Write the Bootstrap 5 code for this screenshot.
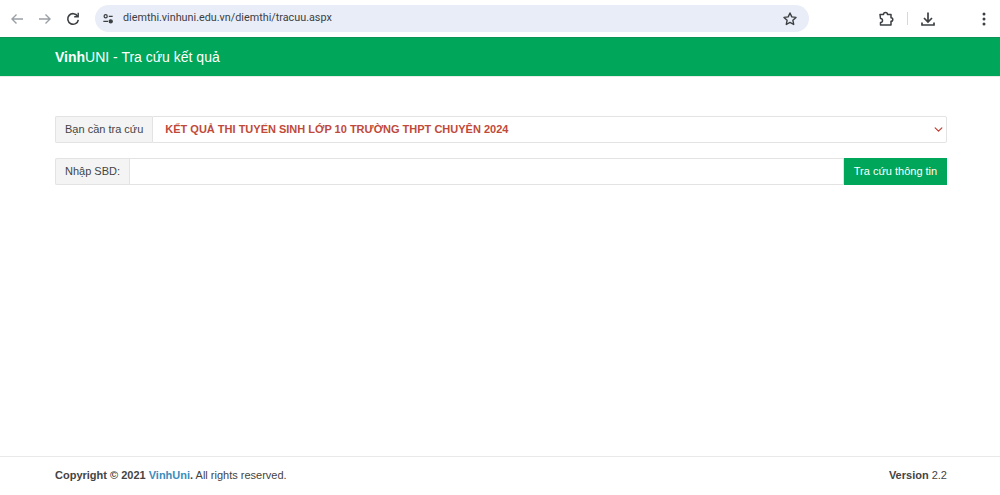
<!DOCTYPE html>
<html lang="vi">
<head>
<meta charset="utf-8">
<title>VinhUNI - Tra cứu kết quả</title>
<link href="https://cdn.jsdelivr.net/npm/bootstrap@5.3.0/dist/css/bootstrap.min.css" rel="stylesheet">
<style>
html,body{height:495px;overflow:hidden}
body{font-family:"Liberation Sans",Arial,sans-serif;font-size:11px;color:#444;background:#fff;display:flex;flex-direction:column}
.chrome-bar{height:37px;background:#fff;padding:0 0 0 3px;flex:none}
.tool-ico{width:18px;height:18px;flex:none;display:block}
.nav-slot{width:28px;display:flex;justify-content:center;align-items:center;height:37px;flex:none}
.url-pill{width:714px;height:27px;margin-top:5px;margin-left:8px;border-radius:14px;background:#e9edf7;padding:0 9px 0 6px;color:#3c4043;font-size:10.8px;font-family:"Roboto","Liberation Sans",sans-serif}
.tune-chip{width:14px;height:14px;flex:none;margin-right:8px}
.star-ico{margin-right:1px}
.right-tools{margin-left:68px;height:37px}
.tool-sep{width:1px;height:13px;background:#d5d8de;margin:0 12px}
.dl-ico{margin-left:-1px}
.more-ico{margin-left:38px}
.brand-bar{height:40px;flex:none;background:#00a65a;color:#fff;font-size:14px;padding:1px 55px 0;border-top:1px solid #0b9455;border-bottom:1px solid #e8efe9}
.page-body{padding:39px 53px 0 55px;flex:1 1 auto}
.field-row{height:27px;margin-bottom:15px}
.addon-txt{background:#f4f4f4;border:1px solid #e3e3e3;border-right:0;color:#444;font-size:11px;padding:0 9px;border-radius:2px 0 0 2px;white-space:nowrap;flex:none}
.field-box{border:1px solid #e3e3e3;border-radius:0;flex:1 1 auto;min-width:0;height:100%;min-height:0;background:#fff;box-shadow:none}
.pick-box{height:27px;min-height:0;border-radius:0 2px 2px 0;border:1px solid #e3e3e3;padding:0 25px 0 12px;color:#bf4a3a;font-weight:700;font-size:11px;background-size:9px 9px;background-position:right 3px center;--bs-form-select-bg-img:url("data:image/svg+xml,%3csvg xmlns='http://www.w3.org/2000/svg' viewBox='0 0 16 16'%3e%3cpath fill='none' stroke='%23c0392b' stroke-linecap='round' stroke-linejoin='round' stroke-width='2' d='m2 5 6 6 6-6'/%3e%3c/svg%3e")}
.go-btn{background:#00a65a;color:#fff;border:0;border-radius:0;font-size:11px;width:103px;padding:0;height:27px;flex:none}
.go-btn:hover{background:#00a65a;color:#fff}
.page-foot{height:39px;flex:none;border-top:1px solid #e9e9e9;padding:0 53px 1px 55px;font-size:11px;color:#444}
.foot-link{color:#3c8dbc;text-decoration:none}
</style>
</head>
<body>
<div class="chrome-bar d-flex align-items-start">
  <span class="nav-slot"><svg class="tool-ico" viewBox="0 0 18 18" fill="none" stroke="#9aa0a6" stroke-width="1.4"><path d="M15 9H4M8.5 4.5 4 9l4.5 4.5"/></svg></span>
  <span class="nav-slot"><svg class="tool-ico" viewBox="0 0 18 18" fill="none" stroke="#9aa0a6" stroke-width="1.4"><path d="M3 9h11M9.5 4.5 14 9l-4.5 4.5"/></svg></span>
  <span class="nav-slot"><svg class="tool-ico" viewBox="0 0 18 18" fill="none" stroke="#3c4043" stroke-width="1.6"><path d="M13.6 6.2A5.3 5.3 0 1 0 14.3 9.8"/><path d="M14.2 2.8v4h-4" stroke-width="1.4"/></svg></span>
  <div class="url-pill d-flex align-items-center">
    <svg class="tune-chip" viewBox="0 0 18 18" fill="none" stroke="#3c4043" stroke-width="1.6"><circle cx="6" cy="5.5" r="2"/><path d="M10 5.5h5M3 12h6"/><circle cx="12.5" cy="12" r="2" fill="#3c4043"/></svg>
    <span>diemthi.vinhuni.edu.vn/diemthi/tracuu.aspx</span>
    <svg class="tool-ico star-ico ms-auto" viewBox="0 0 18 18" fill="none" stroke="#3c4043" stroke-width="1.4" stroke-linejoin="round"><path d="m9 3 1.8 3.9 4.2.5-3.1 2.9.8 4.2L9 12.4l-3.7 2.1.8-4.2L3 7.4l4.2-.5z"/></svg>
  </div>
  <div class="right-tools d-flex align-items-center">
    <svg class="tool-ico" viewBox="0 0 18 18" fill="none" stroke="#3c4043" stroke-width="1.5" stroke-linejoin="round"><path d="M3 4.5h3.5a2 2 0 0 1 4 0H14v3.2a1.8 1.8 0 0 1 0 3.6V15H3.5v-2.5a2 2 0 0 0 0-4z"/></svg>
    <span class="tool-sep"></span>
    <svg class="tool-ico dl-ico" viewBox="0 0 18 18" fill="none" stroke="#3c4043" stroke-width="1.7"><path d="M9 2.5v9M5 8l4 4 4-4M3 12.5V15h12v-2.5"/></svg>
    <svg class="tool-ico more-ico" viewBox="0 0 18 18" fill="#3c4043"><circle cx="9" cy="4" r="1.5"/><circle cx="9" cy="9" r="1.5"/><circle cx="9" cy="14" r="1.5"/></svg>
  </div>
</div>

<div class="brand-bar d-flex align-items-center"><span><b>Vinh</b>UNI - Tra cứu kết quả</span></div>

<main class="page-body">
  <div class="field-row d-flex">
    <span class="addon-txt d-flex align-items-center">Bạn cần tra cứu</span>
    <select class="form-select pick-box" aria-label="Bạn cần tra cứu"><option>KẾT QUẢ THI TUYỂN SINH LỚP 10 TRƯỜNG THPT CHUYÊN 2024</option></select>
  </div>
  <div class="field-row d-flex">
    <span class="addon-txt d-flex align-items-center">Nhập SBD:</span>
    <input class="form-control field-box" type="text" aria-label="Nhập SBD">
    <button class="btn go-btn" type="button">Tra cứu thông tin</button>
  </div>
</main>

<footer class="page-foot d-flex align-items-center justify-content-between">
  <span><b>Copyright © 2021 <a class="foot-link" href="#">VinhUni</a>.</b> All rights reserved.</span>
  <span><b>Version</b> 2.2</span>
</footer>
<script src="https://cdn.jsdelivr.net/npm/bootstrap@5.3.0/dist/js/bootstrap.bundle.min.js"></script>
</body>
</html>
